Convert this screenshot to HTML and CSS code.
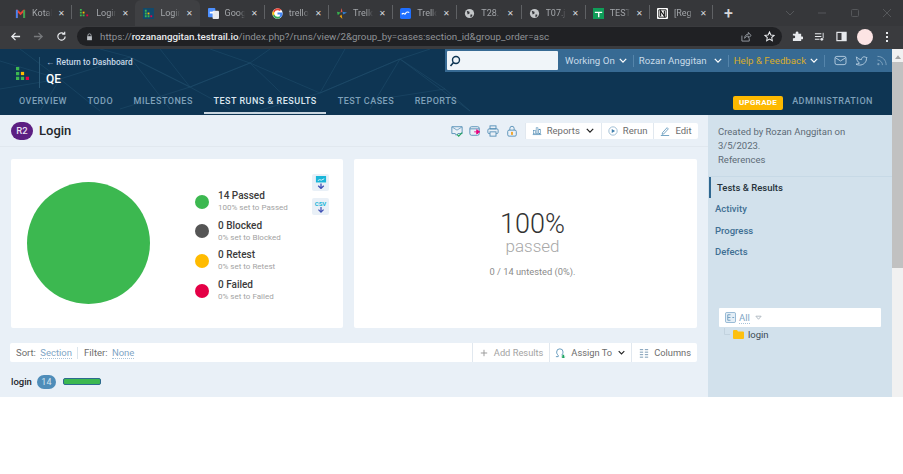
FILE: index.html
```html
<!DOCTYPE html>
<html>
<head>
	<meta charset="UTF-8">
	<title>Login - TestRail</title>
	<link rel="stylesheet" href="styles.css">
</head>
<body>
	<div class="tabs">
		<div class="tab"><svg class="fav" viewBox="0 0 12 12"><path d="M1 2h2l3 3 3-3h2v9H9V5L6 8 3 5v6H1z" fill="#ea4335"/><path d="M1 2h2v9H1z" fill="#4285f4"/><path d="M9 3l2-1v9H9z" fill="#34a853"/></svg><span class="tab-t">Kotal</span><span class="tab-x">✕</span></div>
		<div class="tab sep"><svg class="fav" viewBox="0 0 12 12"><path d="M1 1h2v2H1zM1 4h2v2H1zM1 7h2v2H1zM4 7h2v2H4z" fill="#3cb850"/><path d="M4 4h2v2H4z" fill="#ffbb00"/><path d="M8 7h2v2H8z" fill="#e40046"/></svg><span class="tab-t">Login</span><span class="tab-x">✕</span></div>
		<div class="tab active"><svg class="fav" viewBox="0 0 12 12"><rect width="12" height="12" fill="#12496b"/><path d="M2 2h2v2H2zM2 5h2v2H2zM2 8h2v2H2zM5 8h2v2H5z" fill="#3cb850"/><path d="M5 5h2v2H5z" fill="#ffbb00"/><path d="M8 8h2v2H8z" fill="#e40046"/></svg><span class="tab-t">Login</span><span class="tab-x">✕</span></div>
		<div class="tab"><svg class="fav" viewBox="0 0 12 12"><rect x="0" y="0" width="8" height="10" rx="1" fill="#4d90fe"/><rect x="5" y="3" width="7" height="9" rx="1" fill="#e8eaed"/><path d="M2 4h4v2H2z" fill="#fff"/></svg><span class="tab-t">Goog</span><span class="tab-x">✕</span></div>
		<div class="tab sep"><svg class="fav" viewBox="0 0 12 12"><circle cx="6" cy="6" r="5.6" fill="#fff"/><path d="M6 2.400a3.600 3.600 0 0 1 2.500 1L10 2A5.600 5.600 0 0 0 1 3.600l1.600 1.200A3.600 3.600 0 0 1 6 2.400z" fill="#ea4335"/><path d="M2.600 7.200 1 8.400A5.600 5.600 0 0 1 1 3.600l1.600 1.200a3.600 3.600 0 0 0 0 2.400z" fill="#fbbc05"/><path d="M6 9.600a3.600 3.600 0 0 1-3.400-2.400L1 8.400a5.600 5.600 0 0 0 8.500 2L8 9a3.600 3.600 0 0 1-2 .6z" fill="#34a853"/><path d="M11.400 5H6v2.200h3a2.600 2.600 0 0 1-1 1.800l1.500 1.400A5.600 5.600 0 0 0 11.400 5z" fill="#4285f4"/></svg><span class="tab-t">trello</span><span class="tab-x">✕</span></div>
		<div class="tab sep"><svg class="fav" viewBox="0 0 12 12"><path d="M6 0l1 4-2 1z" fill="#e2574c"/><path d="M7 4l5 1-4 2z" fill="#2d7dd2"/><path d="M5 5L1 4l1 4z" fill="#37b24d"/><path d="M6 7l1 5-3-3z" fill="#f0a30a"/></svg><span class="tab-t">Trello</span><span class="tab-x">✕</span></div>
		<div class="tab sep"><svg class="fav" viewBox="0 0 12 12"><rect width="12" height="12" rx="2" fill="#1f6fff"/><path d="M2 7c2-3 3 1 4-1s3-2 4-1" fill="none" stroke="#fff" stroke-width="1.300"/></svg><span class="tab-t">Trello</span><span class="tab-x">✕</span></div>
		<div class="tab sep"><svg class="fav" viewBox="0 0 12 12"><circle cx="6" cy="6" r="5" fill="#c4c7c9"/><path d="M3 3l3 1v2L4 7zM7 7l2 0 0 2-2 1z" fill="#35363a"/></svg><span class="tab-t">T28.1</span><span class="tab-x">✕</span></div>
		<div class="tab sep"><svg class="fav" viewBox="0 0 12 12"><circle cx="6" cy="6" r="5" fill="#c4c7c9"/><path d="M3 3l3 1v2L4 7zM7 7l2 0 0 2-2 1z" fill="#35363a"/></svg><span class="tab-t">T07.j</span><span class="tab-x">✕</span></div>
		<div class="tab sep"><svg class="fav" viewBox="0 0 12 12"><rect width="12" height="12" fill="#0f9d58"/><path d="M2 4h8v1.400H7V10H5.500V5.400H2z" fill="#fff"/></svg><span class="tab-t">TESTI</span><span class="tab-x">✕</span></div>
		<div class="tab sep last"><svg class="fav" viewBox="0 0 12 12"><rect width="12" height="12" rx="1" fill="#fff"/><path d="M2 2h8v8H2z" fill="none" stroke="#111" stroke-width="1"/><path d="M4 9V3l4 6V3" fill="none" stroke="#111" stroke-width="1.200"/></svg><span class="tab-t">[Reg</span><span class="tab-x">✕</span></div>
		<div class="tab-plus">+</div>
		<div class="win-btns">
			<svg viewBox="0 0 10 10"><path d="M1 3l4 4 4-4" fill="none" stroke="#55575a"/></svg>
			<svg viewBox="0 0 10 10"><path d="M1 5h8" stroke="#55575a"/></svg>
			<svg viewBox="0 0 10 10"><rect x="1.500" y="1.500" width="7" height="7" rx="1" fill="none" stroke="#55575a"/></svg>
			<svg viewBox="0 0 10 10"><path d="M1 1l8 8M9 1l-8 8" stroke="#55575a"/></svg>
		</div>
	</div>

	<div class="bar">
		<svg class="nav-ic" viewBox="0 0 12 12"><path d="M11 6H2M6 2L2 6l4 4" fill="none" stroke="#e8eaed" stroke-width="1.400"/></svg>
		<svg class="nav-ic" viewBox="0 0 12 12"><path d="M1 6h9M6 2l4 4-4 4" fill="none" stroke="#77797c" stroke-width="1.400"/></svg>
		<svg class="nav-ic" viewBox="0 0 12 12"><path d="M10 6a4 4 0 1 1-1.200-2.900M9.500 0.800V3.500H6.800" fill="none" stroke="#e8eaed" stroke-width="1.300"/></svg>
		<div class="omni">
			<svg class="lock" viewBox="0 0 8 10"><path d="M2 4V3a2 2 0 0 1 4 0v1" fill="none" stroke="#bdc1c6"/><rect x="1" y="4" width="6" height="5" fill="#bdc1c6"/></svg>
			<span class="url">https://<b>rozananggitan.testrail.io</b>/index.php?/runs/view/2&amp;group_by=cases:section_id&amp;group_order=asc</span>
			<svg class="omni-ic" viewBox="0 0 12 12"><path d="M1 5v6h8V8M4 8c0-3 2-4.500 4-4.500V1.500L11 5 8 7.500V5.500C6.500 5.500 5 6.300 4 8z" fill="none" stroke="#9aa0a6"/></svg>
			<svg class="omni-ic" viewBox="0 0 12 12"><path d="M6 1l1.500 3.300 3.500.4-2.600 2.400.7 3.500L6 8.800 2.900 10.600l.7-3.500L1 4.700l3.500-.4z" fill="none" stroke="#e8eaed" stroke-width="1.100"/></svg>
		</div>
		<div class="ext">
			<svg viewBox="0 0 12 12"><path d="M1 3h3V2a1.500 1.500 0 0 1 3 0v1h3v3h1a1.500 1.500 0 0 1 0 3h-1v2H1V8h1a1.500 1.500 0 0 0 0-3H1z" fill="#e8eaed"/></svg>
			<svg viewBox="0 0 12 12"><path d="M1 3h7M1 6h7M1 9h5" stroke="#e8eaed" stroke-width="1.200"/><path d="M10 2v6" stroke="#e8eaed"/><circle cx="8.500" cy="9" r="1.500" fill="#e8eaed"/></svg>
			<svg viewBox="0 0 12 12"><rect x="1" y="1.500" width="10" height="9" fill="none" stroke="#e8eaed" stroke-width="1.300"/><rect x="6" y="1.500" width="5" height="9" fill="#e8eaed"/></svg>
			<span class="avatar"></span>
			<span class="dots"><i></i><i></i><i></i></span>
		</div>
	</div>

	<div class="page">
		<div class="app">
			<div class="head">
				<svg class="mesh" viewBox="0 0 892 66" preserveAspectRatio="none"><path d="M0 12 60 30 130 8 190 38 250 14 320 44 400 10 445 40M60 30 40 62M130 8 170 60M190 38 120 60M250 14 300 62M320 44 250 64M400 10 370 60M20 0 60 30M190 38 250 14 210 0M320 44 345 0M445 40 470 62 400 10M0 40 60 30 100 62M130 8 100 0M190 38 230 60M320 44 400 10 430 0M270 0 250 14M130 8 190 38 160 0M445 40 380 50" fill="none" stroke="#1f4b69" stroke-width=".6"/></svg>
				<div class="head-top">
					<div class="brand">
						<svg class="logo" viewBox="0 0 12 12"><path d="M0 0h3v3H0zM0 4.500h3v3H0zM0 9h3v3H0zM4.500 9h3v3h-3z" fill="#3cb850"/><path d="M4.500 4.500h3v3h-3z" fill="#ffbb00"/><path d="M9 9h3v3H9z" fill="#e40046"/></svg>
						<div class="brand-t">
							<a class="back">← Return to Dashboard</a>
							<div class="proj">QE</div>
						</div>
					</div>
					<div class="userbar">
						<div class="search"><svg viewBox="0 0 12 12"><circle cx="7" cy="5" r="3.500" fill="none" stroke="#0e3553" stroke-width="1.400"/><path d="M4.500 7.500 1.500 11" stroke="#0e3553" stroke-width="1.600"/></svg></div>
						<span class="ub-item">Working On<svg class="chev" viewBox="0 0 10 6"><path d="M1 1l4 4 4-4" fill="none" stroke="#fff" stroke-width="1.600"/></svg></span>
						<span class="ub-item wide">Rozan Anggitan<svg class="chev" viewBox="0 0 10 6"><path d="M1 1l4 4 4-4" fill="none" stroke="#fff" stroke-width="1.600"/></svg></span>
						<span class="ub-item help">Help &amp; Feedback<svg class="chev" viewBox="0 0 10 6"><path d="M1 1l4 4 4-4" fill="none" stroke="#fff" stroke-width="1.600"/></svg></span>
						<span class="ub-icons">
							<svg viewBox="0 0 14 12"><rect x="1" y="1.500" width="12" height="9" rx="2" fill="none" stroke="#b9d0e2"/><path d="M1.500 3 7 6.500 12.500 3" fill="none" stroke="#b9d0e2"/></svg>
							<svg viewBox="0 0 14 12"><path d="M1.500 2c1.500 2 3.500 3 5.500 3 0-3 3.500-4 5-2l1-.4-.6 1.400C12.500 8 9 11 5 11c-1.500 0-3-.4-4-1 1.500 0 2.800-.4 3.800-1.200C3 8 1.500 5 1.500 2z" fill="none" stroke="#b9d0e2"/></svg>
							<svg viewBox="0 0 14 12"><circle cx="2.500" cy="10" r="1.200" fill="#7fa3bf"/><path d="M1.500 5.500c3 0 5.500 2.500 5.500 5.500M1.500 1.500c5.500 0 9.500 4 9.500 9.500" fill="none" stroke="#7fa3bf"/></svg>
						</span>
					</div>
				</div>
				<nav class="menu">
					<a>OVERVIEW</a>
					<a>TODO</a>
					<a>MILESTONES</a>
					<a class="on">TEST RUNS &amp; RESULTS</a>
					<a>TEST CASES</a>
					<a>REPORTS</a>
					<span class="upgrade">UPGRADE</span>
					<a class="admin">ADMINISTRATION</a>
				</nav>
			</div>

			<div class="body">
				<main class="main">
					<div class="title-row">
						<span class="run-id">R2</span>
						<h1>Login</h1>
						<div class="title-ic">
							<svg viewBox="0 0 14 14"><path d="M1 2h12v8H8l-2 2-1-2H1z" fill="none" stroke="#4d8ab3"/><path d="M1.500 2.500 7 6l5.500-3.500" fill="none" stroke="#4d8ab3" stroke-width=".8"/><path d="M7 11l2 2 4-4" fill="none" stroke="#22a45d" stroke-width="1.300"/></svg>
							<svg viewBox="0 0 14 14"><rect x="1" y="2" width="11" height="10" rx="2" fill="none" stroke="#4d8ab3"/><path d="M1 4.500h11" stroke="#4d8ab3"/><path d="M6 8h5M9 5.500 12.500 8 9 10.500z" fill="#e6007e" stroke="#e6007e"/></svg>
							<svg viewBox="0 0 14 14"><rect x="3.500" y="1" width="7" height="3.500" fill="none" stroke="#4d8ab3"/><rect x="1" y="4.500" width="12" height="5.500" rx="1.500" fill="none" stroke="#4d8ab3"/><rect x="3.500" y="8" width="7" height="5" fill="#e9f0f7" stroke="#4d8ab3"/></svg>
							<svg viewBox="0 0 14 14"><path d="M4.500 6V4a2.500 2.500 0 0 1 5 0v2" fill="none" stroke="#4d8ab3"/><rect x="2" y="6" width="10" height="7" rx="1.500" fill="none" stroke="#4d8ab3"/><rect x="6" y="8" width="2" height="3.500" fill="#f39c12"/></svg>
						</div>
						<div class="btns">
							<span class="btn"><svg viewBox="0 0 14 12"><path d="M1 11h12" stroke="#4d8ab3"/><rect x="2" y="5" width="2.500" height="5" fill="none" stroke="#4d8ab3" stroke-width=".8"/><rect x="5.800" y="1.500" width="2.500" height="8.500" fill="none" stroke="#4d8ab3" stroke-width=".8"/><rect x="9.500" y="3.500" width="2.500" height="6.500" fill="none" stroke="#4d8ab3" stroke-width=".8"/></svg>Reports<svg class="chev dark" viewBox="0 0 10 6"><path d="M1 1l4 4 4-4" fill="none" stroke="#222" stroke-width="1.600"/></svg></span>
							<span class="btn"><svg viewBox="0 0 12 12"><circle cx="6" cy="6" r="5" fill="none" stroke="#8fb3cd"/><path d="M4.500 3.500 8.500 6l-4 2.500z" fill="#3f7fae"/></svg>Rerun</span>
							<span class="btn"><svg viewBox="0 0 12 12"><path d="M3 8l5.500-6 1.500 1.500L4.500 9.500 2.500 10z" fill="none" stroke="#4d8ab3" stroke-width=".9"/><path d="M1 11.500h10" stroke="#4d8ab3"/></svg>Edit</span>
						</div>
					</div>

					<div class="cards">
						<section class="card chart-card">
							<div class="pie"></div>
							<ul class="legend">
								<li><i class="dot passed"></i><div><b>14 Passed</b><small>100% set to Passed</small></div></li>
								<li><i class="dot blocked"></i><div><b>0 Blocked</b><small>0% set to Blocked</small></div></li>
								<li><i class="dot retest"></i><div><b>0 Retest</b><small>0% set to Retest</small></div></li>
								<li><i class="dot failed"></i><div><b>0 Failed</b><small>0% set to Failed</small></div></li>
							</ul>
							<div class="dl">
								<span class="dl-btn"><svg viewBox="0 0 13 14"><rect x="1" y="0" width="11" height="7" fill="#19b5d8"/><path d="M3 5l2-1 2 .5 3-1.500" stroke="#fff" fill="none" stroke-width=".9"/><path d="M6.500 8v5.500M3.500 10.500 6.500 13.500 9.500 10.500" fill="none" stroke="#3f51b5" stroke-width="1.400"/></svg></span>
								<span class="dl-btn"><span class="csv">CSV</span><svg viewBox="0 0 13 7"><path d="M6.500 0v6M3.500 3 6.500 6 9.500 3" fill="none" stroke="#3f51b5" stroke-width="1.400"/></svg></span>
							</div>
						</section>
						<section class="card stat-card">
							<div class="pct">100%</div>
							<div class="pct-l">passed</div>
							<div class="pct-s">0 / 14 untested (0%).</div>
						</section>
					</div>

					<div class="tools">
						<span class="t-txt">Sort: <a>Section</a></span>
						<span class="t-txt t-line">Filter: <a>None</a></span>
						<span class="t-btn first muted"><svg viewBox="0 0 10 10"><path d="M5 1v8M1 5h8" stroke="#9a9a9a" stroke-width="1.200"/></svg>Add Results</span>
						<span class="t-btn assign"><svg viewBox="0 0 12 12"><path d="M1 10.500h2.500V9C2.300 8 1.800 6.800 1.800 5.500a3.500 3.500 0 0 1 7 0c0 1.300-.6 2.500-1.600 3.500" fill="none" stroke="#4d8ab3" stroke-width=".9"/><path d="M8 8.500v2H6.500L9 12.500l2.500-2H10v-2z" fill="#1fa463"/></svg>Assign To<svg class="chev dark" viewBox="0 0 10 6"><path d="M1 1l4 4 4-4" fill="none" stroke="#222" stroke-width="1.600"/></svg></span>
						<span class="t-btn"><svg viewBox="0 0 12 12"><path d="M1 2h4M1 5h4M1 8h4M1 11h4M7 2h4M7 5h4M7 8h4M7 11h4" stroke="#7b9bb5" stroke-width="1.200"/></svg>Columns</span>
					</div>

					<div class="group">
						<b>login</b>
						<span class="count">14</span>
						<span class="mini"></span>
					</div>
				</main>

				<aside class="side">
					<div class="side-info">
						<p>Created by Rozan Anggitan on 3/5/2023.</p>
						<p>References</p>
					</div>
					<ul class="side-nav">
						<li class="cur">Tests &amp; Results</li>
						<li>Activity</li>
						<li>Progress</li>
						<li>Defects</li>
					</ul>
					<div class="tree-head">
						<svg viewBox="0 0 12 12"><rect x=".5" y=".5" width="11" height="11" rx="1.500" fill="#e4eef6" stroke="#8db3d0"/><path d="M3 3h3M3 3v6M3 6h3M3 9h3M8 6h2" stroke="#6d9cc0"/></svg>
						<a>All</a>
						<svg class="caret" viewBox="0 0 8 5"><path d="M1 1h6L4 4.500z" fill="none" stroke="#a9b4bd"/></svg>
					</div>
					<div class="tree-row">
						<svg class="branch" viewBox="0 0 6 7"><path d="M.5 0v6.500H6" fill="none" stroke="#c2d2de"/></svg>
						<svg viewBox="0 0 11 9"><path d="M0 1a1 1 0 0 1 1-1h3l1 1.500h5a1 1 0 0 1 1 1V8a1 1 0 0 1-1 1H1a1 1 0 0 1-1-1z" fill="#fdc010"/></svg>
						<span>login</span>
					</div>
				</aside>
			</div>
		</div>
		<div class="scroll">
			<svg viewBox="0 0 8 5"><path d="M4 0l4 5H0z" fill="#a3a3a3"/></svg>
			<div class="thumb"></div>
		</div>
	</div>
</body>
</html>
```

FILE: styles.css
```css
* {
	margin: 0;
	padding: 0;
	box-sizing: border-box;
	list-style-type: none;
}

body {
	background: #fff;
	font-family: "Roboto", "Liberation Sans", sans-serif;
	overflow: hidden;
	height: 474px;
}

svg {
	display: block;
	flex: none;
}

/* browser chrome */
.tabs {
	height: 26px;
	background: #36373a;
	display: flex;
	align-items: center;
	padding-left: 7px;
}

.tab {
	width: 64.2px;
	height: 26px;
	display: flex;
	align-items: center;
	padding-left: 8px;
	position: relative;
	color: #a3a6aa;
	font-size: 9px;
}

.tab.sep::before {
	content: "";
	width: 1px;
	height: 14px;
	background: #5f6164;
	position: absolute;
	left: 0;
	top: 5px;
}

.tab.last::after {
	content: "";
	width: 1px;
	height: 14px;
	background: #5f6164;
	position: absolute;
	right: 0;
	top: 5px;
}

.tab.active {
	background: #3f4043;
	border-radius: 6px 6px 0 0;
}

.fav {
	width: 11px;
	height: 11px;
	margin-right: 6px;
}

.tab-t {
	width: 20px;
	flex: none;
	white-space: nowrap;
	-webkit-mask-image: linear-gradient(to right, #000 70%, transparent 100%);
	mask-image: linear-gradient(to right, #000 70%, transparent 100%);
}

.tab-x {
	color: #d5d7da;
	font-size: 8px;
	margin-left: 6px;
}

.tab-plus {
	color: #d5d7da;
	font-size: 16px;
	margin-left: 11px;
	font-weight: 500;
}

.win-btns {
	display: flex;
	gap: 22.5px;
	margin-left: auto;
	padding-right: 11px;
}

.win-btns svg {
	width: 10px;
	height: 10px;
}

.bar {
	height: 23px;
	background: #3a3b3e;
	display: flex;
	align-items: center;
	padding: 0 0 2px 10px;
	gap: 12px;
}

.nav-ic {
	width: 11px;
	height: 11px;
}

.omni {
	width: 705px;
	height: 19px;
	margin-left: -2px;
	background: #202124;
	border-radius: 10px;
	display: flex;
	align-items: center;
	padding-left: 9px;
	color: #8f9296;
	font-size: 9.8px;
}

.lock {
	width: 7px;
	height: 8px;
	margin-right: 7px;
}

.url {
	flex: 1;
	white-space: nowrap;
}

.url b {
	color: #e8eaed;
	font-weight: 500;
}

.omni-ic {
	width: 11px;
	height: 11px;
	margin-right: 12px;
}

.omni-ic:last-child {
	margin-right: 7px;
}

.ext {
	display: flex;
	align-items: center;
	gap: 11px;
	margin-left: -2px;
}

.ext svg {
	width: 11px;
	height: 11px;
}

.avatar {
	width: 16px;
	height: 16px;
	border-radius: 50%;
	background: #fce4e4;
	margin-left: -1px;
}

.dots {
	display: flex;
	flex-direction: column;
	gap: 2px;
	margin-left: 2px;
}

.dots i {
	width: 2px;
	height: 2px;
	background: #e8eaed;
	display: block;
}

/* testrail page */
.page {
	display: flex;
	height: 348px;
}

.app {
	flex: 1;
	display: flex;
	flex-direction: column;
	min-width: 0;
}

.scroll {
	width: 11px;
	background: #f1f1f1;
	padding-top: 6px;
}

.scroll svg {
	width: 6px;
	height: 4px;
	margin: 0 auto 3px;
}

.thumb {
	height: 206px;
	background: #c1c1c1;
}

.head {
	height: 66px;
	background: #0e3553;
	position: relative;
	overflow: hidden;
	flex: none;
}

.mesh {
	position: absolute;
	left: 0;
	top: 0;
	width: 100%;
	height: 100%;
}

.head-top {
	position: relative;
	display: flex;
	justify-content: space-between;
	height: 42px;
}

.brand {
	display: flex;
	padding: 8px 0 0 16px;
}

.logo {
	width: 13px;
	height: 13px;
	margin: 10px 10px 0 0;
}

.brand-t {
	border-left: 1px solid #2a5876;
	padding-left: 6px;
	height: 31px;
}

.back {
	display: block;
	color: #c5d7e6;
	font-size: 8.3px;
	font-weight: 500;
	line-height: 10px;
}

.proj {
	color: #fff;
	font-size: 12px;
	font-weight: 500;
	line-height: 14px;
	margin-top: 5px;
}

.userbar {
	width: 447px;
	height: 23px;
	background: #376a93;
	display: flex;
	align-items: center;
	padding-left: 2px;
	font-size: 9.7px;
	color: #c8dbe9;
}

.search {
	width: 111px;
	height: 19px;
	background: #f0f5f9;
	border-radius: 1px;
	display: flex;
	align-items: center;
	padding-left: 2px;
	margin-right: 7px;
}

.search svg {
	width: 12px;
	height: 12px;
}

.ub-item {
	display: flex;
	align-items: center;
	gap: 4px;
	padding-right: 6px;
	margin-right: 5px;
	border-right: 1px solid #5585ab;
	height: 12px;
	white-space: nowrap;
}

.ub-item.wide {
	gap: 7px;
}

.help {
	color: #d9ad2b;
}

.chev {
	width: 8px;
	height: 5px;
}

.ub-icons {
	display: flex;
	gap: 8px;
	margin-left: 4px;
}

.ub-icons svg {
	width: 13px;
	height: 11px;
}

.menu {
	position: relative;
	height: 23px;
	display: flex;
	align-items: center;
	padding-left: 19px;
	font-size: 9px;
	letter-spacing: 0.5px;
	color: #7ea0b9;
	font-weight: 500;
}

.menu a {
	margin-right: 20.5px;
	white-space: nowrap;
	height: 23px;
	line-height: 21px;
}

.menu .on {
	color: #dbe6ef;
	border-bottom: 2px solid #c9d6e0;
	padding: 0 9px;
	margin: 0 12px 0 -9px;
}

.upgrade {
	margin-left: auto;
	background: #fdb900;
	color: #fff;
	font-size: 8px;
	font-weight: 700;
	padding: 0 6px;
	height: 14px;
	line-height: 14px;
	border-radius: 2px;
	margin-right: 9px;
	letter-spacing: 0.3px;
}

.menu .admin {
	margin-right: 19px;
}

.body {
	flex: 1;
	display: flex;
	min-height: 0;
}

.main {
	width: 708px;
	background: #e9f0f7;
	padding: 0 11px;
}

.title-row {
	height: 32px;
	margin: 0 -11px;
	padding: 0 10.5px 0 11px;
	border-bottom: 1px solid #e1e8ef;
	display: flex;
	align-items: center;
}

.run-id {
	width: 22px;
	height: 18px;
	border-radius: 9px;
	background: #5c1f82;
	color: #e9dff0;
	font-size: 9.5px;
	font-weight: 500;
	text-align: center;
	line-height: 18px;
}

h1 {
	font-size: 13px;
	font-weight: 500;
	color: #23272b;
	margin-left: 6px;
}

.title-ic {
	margin-left: auto;
	display: flex;
	gap: 6.3px;
	margin-right: 7px;
}

.title-ic svg {
	width: 12px;
	height: 12px;
}

.btns {
	display: flex;
	height: 16px;
	background: #fff;
	border-radius: 2px;
}

.btn {
	display: flex;
	align-items: center;
	gap: 5px;
	padding: 0 6px;
	font-size: 9.5px;
	color: #6d6d6d;
	border-left: 1px solid #e1e8ef;
}

.btn svg {
	width: 10px;
	height: 10px;
}

.btn .chev {
	width: 8px;
	height: 5px;
	margin: 0 1px;
}

.cards {
	display: flex;
	gap: 11px;
	margin-top: 12px;
}

.card {
	background: #fff;
	height: 169px;
	border-radius: 2px;
}

.chart-card {
	width: 332px;
	display: flex;
	align-items: flex-start;
	padding: 23px 14px 0 16px;
}

.pie {
	width: 123px;
	height: 122px;
	border-radius: 50%;
	background: #3cb850;
	flex: none;
}

.legend {
	margin: 5px 0 0 45px;
	width: 117px;
}

.legend li {
	display: flex;
	align-items: center;
	gap: 9px;
	height: 29.6px;
}

.dot {
	width: 14px;
	height: 14px;
	border-radius: 50%;
	flex: none;
}

.passed { background: #3cb850; }
.blocked { background: #555; }
.retest { background: #ffbb00; }
.failed { background: #e40046; }

.legend b {
	display: block;
	font-size: 10px;
	font-weight: 500;
	color: #3b3b3b;
	line-height: 13px;
}

.legend small {
	display: block;
	font-size: 8px;
	color: #a3a3a3;
	line-height: 12px;
}

.dl {
	margin: -8px 0 0 auto;
	display: flex;
	flex-direction: column;
	gap: 7px;
}

.dl-btn {
	width: 17px;
	height: 17px;
	background: #e9f0f7;
	border-radius: 2px;
	display: flex;
	flex-direction: column;
	align-items: center;
	justify-content: center;
}

.dl-btn svg {
	width: 12px;
}

.csv {
	color: #19b5d8;
	font-size: 6px;
	font-weight: 700;
	line-height: 7px;
}

.dl-btn .csv + svg {
	height: 6px;
}

.stat-card {
	width: 343px;
	text-align: center;
	padding: 51px 0 0 14px;
}

.pct {
	font-size: 27px;
	font-weight: 300;
	color: #333;
	line-height: 28px;
}

.pct-l {
	font-size: 17px;
	font-weight: 300;
	color: #a8a8a8;
	line-height: 16px;
}

.pct-s {
	font-size: 9.3px;
	color: #8b8b8b;
	margin-top: 12px;
}

.tools {
	margin: 15px 0 0 -1px;
	height: 19px;
	background: #fff;
	border-radius: 2px;
	display: flex;
	align-items: center;
	padding-left: 6px;
	font-size: 9.5px;
	color: #6d6d6d;
}

.tools a {
	color: #7fa6c6;
	border-bottom: 1px dotted #a9c4da;
	margin-left: 2px;
}

.t-line {
	border-left: 1px solid #dbe5ed;
	margin-left: 5px;
	padding-left: 6px;
	line-height: 12px;
}

.t-btn {
	height: 19px;
	display: flex;
	align-items: center;
	gap: 5px;
	padding: 0 6px 0 7px;
	border-left: 1px solid #e1e8ef;
	font-size: 9.3px;
}

.t-btn svg {
	width: 10px;
	height: 10px;
}

.t-btn .chev {
	width: 7px;
	height: 5px;
	margin-left: 1px;
}

.assign {
	padding-left: 5px;
}

.assign svg:first-child {
	width: 11px;
	height: 11px;
}

.first {
	margin-left: auto;
}

.muted {
	color: #a3a3a3;
	gap: 6px;
}

.muted svg {
	width: 8px;
	height: 8px;
}

.group {
	display: flex;
	align-items: center;
	margin-top: 11px;
	height: 17px;
	font-size: 9.5px;
	color: #23272b;
}

.group b {
	font-weight: 500;
}

.count {
	width: 19px;
	height: 14px;
	border-radius: 7px;
	background: #4f8db9;
	color: #d5e4ef;
	text-align: center;
	line-height: 14px;
	font-size: 9px;
	margin: 0 7px 0 5px;
}

.mini {
	width: 38px;
	height: 7px;
	border: 1px solid #2d6a8e;
	border-radius: 2px;
	background: #3cb850;
}

.side {
	flex: 1;
	background: #d2e1ec;
	min-width: 0;
}

.side-info {
	height: 62px;
	padding: 10px 30px 0 10px;
	border-bottom: 1px solid #c7d9e6;
	font-size: 9.5px;
	line-height: 14px;
	color: #5d6b76;
}

.side-nav {
	font-size: 9.5px;
	font-weight: 500;
	color: #3f6f93;
}

.side-nav li {
	height: 21.3px;
	line-height: 21px;
	padding-left: 7px;
}

.side-nav .cur {
	color: #26323b;
	border-left: 2px solid #2f6790;
	margin-left: 1px;
	padding-left: 6px;
}

.tree-head {
	margin: 46px 11px 0 11px;
	height: 19px;
	background: #fff;
	border-radius: 1px;
	display: flex;
	align-items: center;
	padding-left: 6px;
	gap: 3px;
	font-size: 9.5px;
}

.tree-head svg {
	width: 11px;
	height: 11px;
}

.tree-head a {
	color: #7fa6c6;
	border-bottom: 1px dotted #a9c4da;
}

.tree-head .caret {
	width: 7px;
	height: 5px;
	margin-left: 2px;
}

.tree-row {
	display: flex;
	align-items: center;
	padding-left: 16px;
	height: 14px;
	font-size: 9.5px;
	color: #3d4a55;
}

.tree-row svg {
	width: 11px;
	height: 9px;
	margin-right: 4px;
}

.tree-row .branch {
	width: 6px;
	height: 7px;
	margin: -6px 3px 0 0;
}
```
